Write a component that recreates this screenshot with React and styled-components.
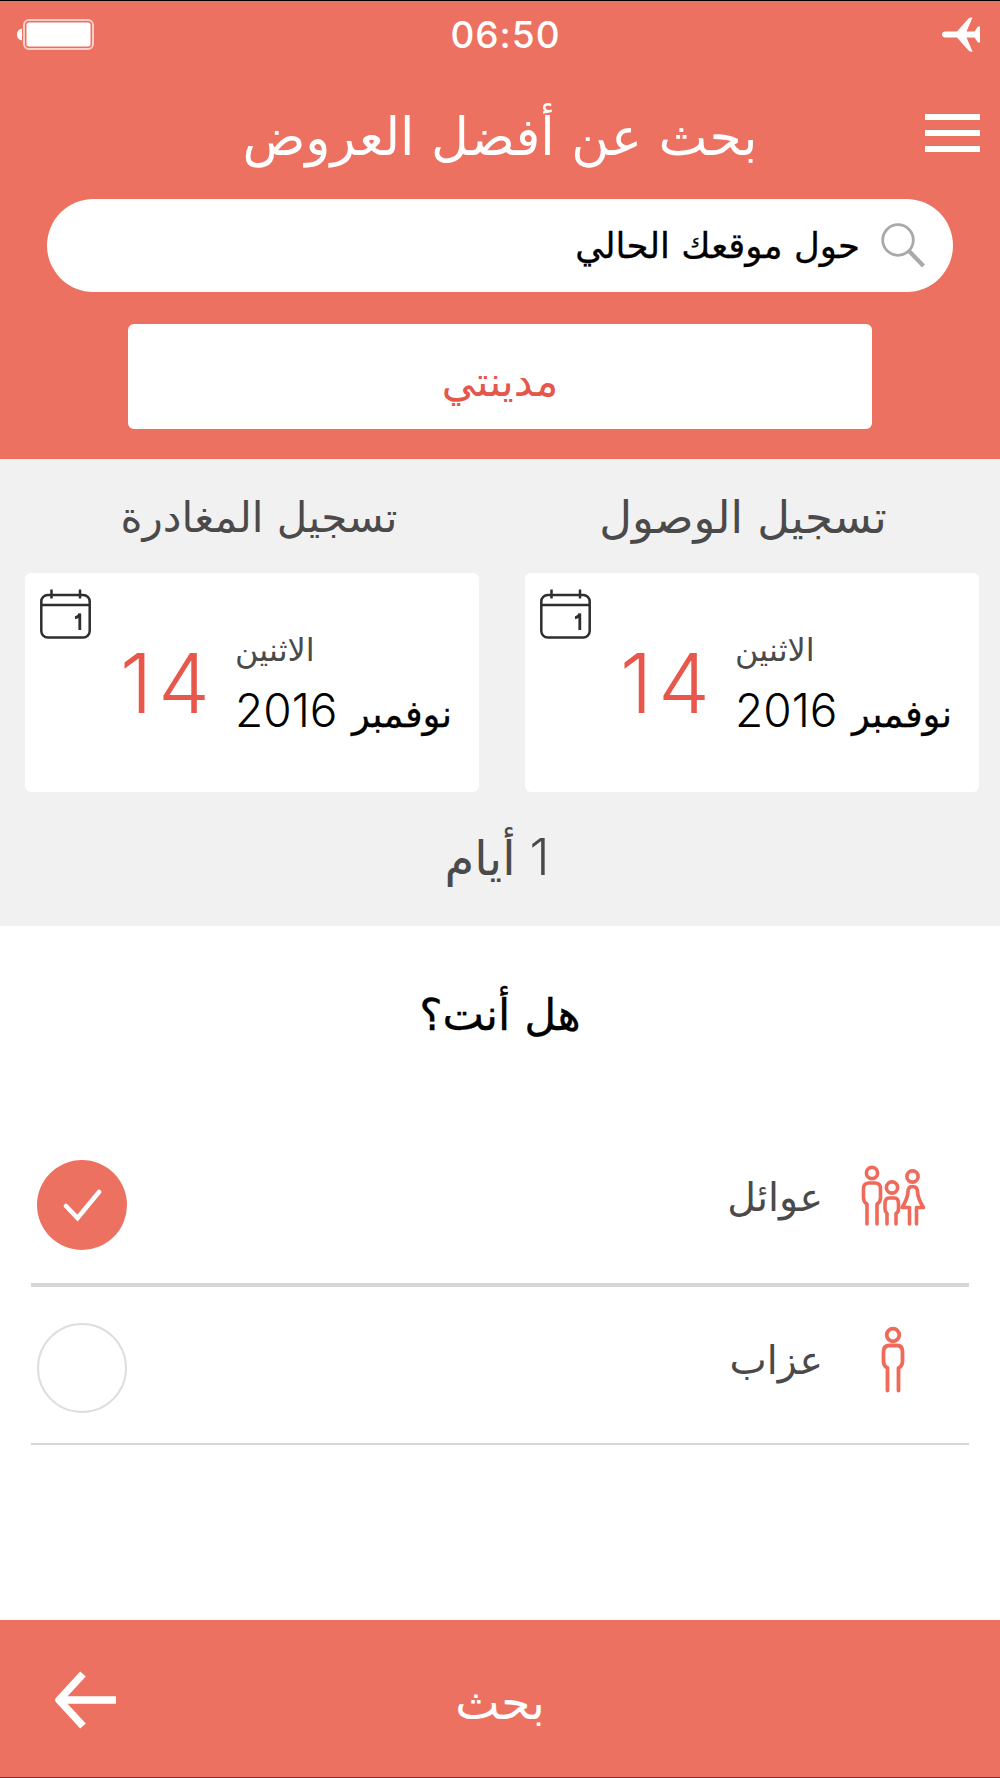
import { useState } from "react";
import styled, { createGlobalStyle } from "styled-components";

const GlobalStyle = createGlobalStyle`
  * {
    box-sizing: border-box;
  }
  body {
    margin: 0;
    background: #fff;
    font-family: "DejaVu Sans", sans-serif;
  }
`;

const BatteryIcon = () => (
  <svg width="78" height="31" viewBox="0 0 78 31">
    <path d="M5 9.500Q0 10.500 0 15.500T5 21.500Z" fill="#fff" />
    <rect x="7" y="1" width="69" height="29" rx="5" fill="none" stroke="#fff" strokeOpacity="0.65" strokeWidth="2" />
    <rect x="9.500" y="3.500" width="64" height="24" rx="2.500" fill="#fff" />
  </svg>
);

const AirplaneIcon = () => (
  <svg width="38" height="35" viewBox="0 0 38 35" fill="#fff">
    <path d="M0 17.500Q0 14.500 3.500 14.500H15L26.500 1.500Q28 0 30.500 0.500L24.500 14.500H32.500L36 9.500H38V25.500H36L32.500 20.500H24.500L30.500 34.500Q28 35 26.500 33.500L15 20.500H3.500Q0 20.500 0 17.500Z" />
  </svg>
);

const SearchIcon = () => (
  <svg width="44" height="45" viewBox="0 0 44 45" fill="none" stroke="#a9a9a9" strokeWidth="2.800">
    <circle cx="17" cy="17" r="15.300" />
    <path d="M27.500 27.500L42.500 43" strokeWidth="4.200" />
  </svg>
);

const CalendarIcon = () => (
  <svg width="51" height="50" viewBox="0 0 51 50" fill="none" stroke="#2e2e2e" strokeWidth="2.500">
    <rect x="1.300" y="6" width="48.400" height="42.600" rx="6.500" />
    <path d="M1.300 16H49.700M11.500 0.500V9.500M40 0.500V9.500" />
    <path d="M35 28.800Q39 28.300 39.800 24.500V41" strokeWidth="2.800" />
  </svg>
);

const FamilyIcon = () => (
  <svg width="64" height="62" viewBox="0 0 64 62" fill="none" stroke="#ef6a5a" strokeWidth="3.600" strokeLinecap="round" strokeLinejoin="round">
    <circle cx="11" cy="8" r="5.600" />
    <path d="M6 59V39Q2.500 37 2.500 33V24Q2.500 18 8 18H14Q19.500 18 19.500 24V33Q19.500 37 16 39V59" />
    <circle cx="31" cy="22.500" r="5.600" />
    <path d="M26 59V48.500Q24 47 24 44V39Q24 33 28 33H33.500Q37.500 33 37.500 39V44Q37.500 47 35 48.500V59" />
    <circle cx="51.500" cy="11.500" r="5.600" />
    <path d="M48.500 59V42.500H41Q46.500 34 47 27Q47 21.500 51.500 21.500Q56.500 21.500 56.500 27Q57 34 62.500 42.500H55.500V59" />
  </svg>
);

const SingleIcon = () => (
  <svg width="24" height="68" viewBox="0 0 24 68" fill="none" stroke="#ef6a5a" strokeWidth="3.800" strokeLinecap="round" strokeLinejoin="round">
    <circle cx="12" cy="9" r="6.300" />
    <path d="M6.500 64.500V42Q2.500 40 2.500 35V26Q2.500 19.500 8.500 19.500H16Q21.500 19.500 21.500 26V35Q21.500 40 17.500 42V64.500" />
  </svg>
);

const CheckIcon = () => (
  <svg width="40" height="34" viewBox="0 0 40 34" fill="none" stroke="#fff" strokeWidth="4.500" strokeLinecap="round">
    <path d="M4 18L15.500 30L37 4" />
  </svg>
);

const ArrowIcon = () => (
  <svg width="62" height="58" viewBox="0 0 62 58" fill="none" stroke="#fff" strokeWidth="7.500" strokeLinejoin="round">
    <path d="M29 3L5 29L29 55M6 29H62" />
  </svg>
);

const dates = [
  { id: "checkout", title: "تسجيل المغادرة", day: "14", weekday: "الاثنين", month: "نوفمبر", year: "2016" },
  { id: "checkin", title: "تسجيل الوصول", day: "14", weekday: "الاثنين", month: "نوفمبر", year: "2016" },
];

const options = [
  { id: "families", label: "عوائل", icon: <FamilyIcon /> },
  { id: "singles", label: "عزاب", icon: <SingleIcon /> },
];

const App = () => {
  const [selected, setSelected] = useState("families");

  return (
    <Screen>
      <GlobalStyle />
      <Header>
        <StatusBar>
          <BatteryIcon />
          <Clock>06:50</Clock>
          <AirplaneIcon />
        </StatusBar>
        <TitleRow>
          <Title>بحث عن أفضل العروض</Title>
          <MenuButton>
            <span />
            <span />
            <span />
          </MenuButton>
        </TitleRow>
        <SearchBox>
          <SearchIcon />
          <SearchText>حول موقعك الحالي</SearchText>
        </SearchBox>
        <CityButton>مدينتي</CityButton>
      </Header>

      <DatesPanel>
        <DatesRow>
          {dates.map((date) => (
            <DateColumn key={date.id}>
              <DateTitle $late={date.id === "checkin"}>{date.title}</DateTitle>
              <DateCard>
                <CalendarIcon />
                <Day>{date.day}</Day>
                <DateInfo>
                  <Weekday>{date.weekday}</Weekday>
                  <MonthYear>
                    <Year>{date.year}</Year>
                    <Month>{date.month}</Month>
                  </MonthYear>
                </DateInfo>
              </DateCard>
            </DateColumn>
          ))}
        </DatesRow>
        <Nights>
          <NightsCount>1</NightsCount>
          <NightsWord>أيام</NightsWord>
        </Nights>
      </DatesPanel>

      <Question>هل أنت؟</Question>
      <Options>
        {options.map((option) => (
          <Option key={option.id} $first={option.id === "families"} onClick={() => setSelected(option.id)}>
            <OptionIcon>{option.icon}</OptionIcon>
            <OptionLabel>{option.label}</OptionLabel>
            <Radio $checked={selected === option.id}>{selected === option.id && <CheckIcon />}</Radio>
          </Option>
        ))}
      </Options>

      <Footer>
        <ArrowIcon />
        <FooterText>بحث</FooterText>
      </Footer>
    </Screen>
  );
};
export default App;

const arabic = `"DejaVu Sans", sans-serif`;
const latin = `Inter, "Liberation Sans", sans-serif`;

const Screen = styled.div`
  width: 1000px;
  height: 1778px;
  display: flex;
  flex-direction: column;
  overflow: hidden;
  border-top: 1px solid #000;
  border-bottom: 1px solid #6e3a34;
`;

const Header = styled.header`
  height: 458px;
  flex: none;
  background: #ed7161;
`;

const StatusBar = styled.div`
  height: 66px;
  padding: 0 20px 0 17px;
  display: grid;
  grid-template-columns: 1fr auto 1fr;
  align-items: center;

  & > svg:last-child {
    justify-self: end;
  }
`;

const Clock = styled.div`
  padding-left: 14px;
  font-family: ${latin};
  font-size: 37px;
  font-weight: 500;
  letter-spacing: 1px;
  color: #fff;
`;

const TitleRow = styled.div`
  height: 132px;
  padding: 0 20px 0 75px;
  display: flex;
  align-items: center;
`;

const Title = styled.h1`
  flex: 1;
  margin: 0;
  padding-top: 8px;
  text-align: center;
  direction: rtl;
  white-space: nowrap;
  font-family: ${arabic};
  font-size: 52px;
  font-weight: 400;
  line-height: 64px;
  color: #fff;
`;

const MenuButton = styled.div`
  width: 55px;
  display: flex;
  flex-direction: column;
  gap: 10px;

  span {
    height: 6px;
    background: #fff;
  }
`;

const SearchBox = styled.div`
  height: 93px;
  margin: 0 47px;
  padding: 0 28px;
  display: flex;
  direction: rtl;
  align-items: center;
  gap: 21px;
  border-radius: 47px;
  background: #fff;
`;

const SearchText = styled.div`
  font-family: ${arabic};
  font-size: 35.5px;
  line-height: 60px;
  color: #000;
  -webkit-text-stroke: 0.3px #000;
`;

const CityButton = styled.div`
  height: 105px;
  margin: 32px 128px 0;
  padding-top: 10px;
  display: flex;
  align-items: center;
  justify-content: center;
  border-radius: 6px;
  background: #fff;
  font-family: ${arabic};
  font-size: 42px;
  color: #e4574c;
`;

const DatesPanel = styled.section`
  height: 467px;
  flex: none;
  background: #f1f1f1;
`;

const DatesRow = styled.div`
  padding: 0 21px 0 25px;
  display: flex;
  justify-content: space-between;
`;

const DateColumn = styled.div`
  width: 454px;
`;

const DateTitle = styled.div`
  height: 114px;
  padding-top: 2px;
  padding-left: ${({ $late }) => ($late ? "0" : "14px")};
  padding-right: ${({ $late }) => ($late ? "18px" : "0")};
  display: flex;
  align-items: center;
  justify-content: center;
  direction: rtl;
  font-family: ${arabic};
  font-size: ${({ $late }) => ($late ? "45px" : "42px")};
  color: #4a4a4a;
`;

const DateCard = styled.div`
  height: 219px;
  padding: 16px 26px 0 15px;
  display: flex;
  align-items: flex-start;
  border-radius: 6px;
  background: #fff;
`;

const Day = styled.div`
  width: 115px;
  margin: 53px 0 0 29px;
  font-family: ${latin};
  font-size: 82px;
  font-weight: 300;
  line-height: 84px;
  letter-spacing: 6px;
  color: #e8574b;
`;

const DateInfo = styled.div`
  width: 217px;
  padding-top: 39px;
`;

const Weekday = styled.div`
  padding-right: 1px;
  font-family: ${arabic};
  font-size: 32px;
  line-height: 44px;
  color: #4a4a4a;
`;

const MonthYear = styled.div`
  height: 60px;
  margin-top: 11px;
  display: flex;
  align-items: baseline;
  justify-content: space-between;
  line-height: 54px;
`;

const Year = styled.span`
  font-family: ${latin};
  font-size: 46px;
  font-weight: 300;
  color: #000;
`;

const Month = styled.span`
  font-family: ${arabic};
  font-size: 37px;
  color: #000;
  -webkit-text-stroke: 0.3px #000;
`;

const Nights = styled.div`
  height: 134px;
  padding-right: 6px;
  display: flex;
  direction: rtl;
  align-items: baseline;
  justify-content: center;
  gap: 14px;
  line-height: 130px;
  color: #4a4a4a;
`;

const NightsCount = styled.span`
  font-family: ${latin};
  font-size: 51px;
  font-weight: 300;
`;

const NightsWord = styled.span`
  font-family: ${arabic};
  font-size: 48px;
`;

const Question = styled.h2`
  height: 194px;
  margin: 0;
  padding-top: 57px;
  display: flex;
  direction: rtl;
  justify-content: center;
  font-family: ${arabic};
  font-size: 44px;
  font-weight: 400;
  line-height: 64px;
  color: #000;
  -webkit-text-stroke: 0.3px #000;
`;

const Options = styled.div`
  flex: 1;
  padding: 0 31px;
`;

const Option = styled.div`
  height: ${({ $first }) => ($first ? "167px" : "158px")};
  padding-right: 38px;
  padding-left: 6px;
  display: flex;
  direction: rtl;
  align-items: center;
  border-bottom: ${({ $first }) => ($first ? "4px" : "2px")} solid #d6d6d6;
`;

const OptionIcon = styled.div`
  width: 76px;
  padding-bottom: 11px;
  display: flex;
  justify-content: center;
`;

const OptionLabel = styled.div`
  flex: 1;
  margin-right: 32px;
  padding-bottom: 10px;
  font-family: ${arabic};
  font-size: 39.5px;
  color: #4a4a4a;
`;

const Radio = styled.div`
  width: 90px;
  height: 90px;
  margin-top: 6px;
  display: flex;
  align-items: center;
  justify-content: center;
  border: ${({ $checked }) => ($checked ? "none" : "2px solid #dedede")};
  border-radius: 50%;
  background: ${({ $checked }) => ($checked ? "#ed7161" : "#fff")};
`;

const Footer = styled.footer`
  height: 157px;
  padding: 2px 54px 0;
  flex: none;
  display: grid;
  grid-template-columns: 1fr auto 1fr;
  align-items: center;
  background: #ed7161;
`;

const FooterText = styled.div`
  padding-top: 6px;
  font-family: ${arabic};
  font-size: 47px;
  color: #fff;
`;
